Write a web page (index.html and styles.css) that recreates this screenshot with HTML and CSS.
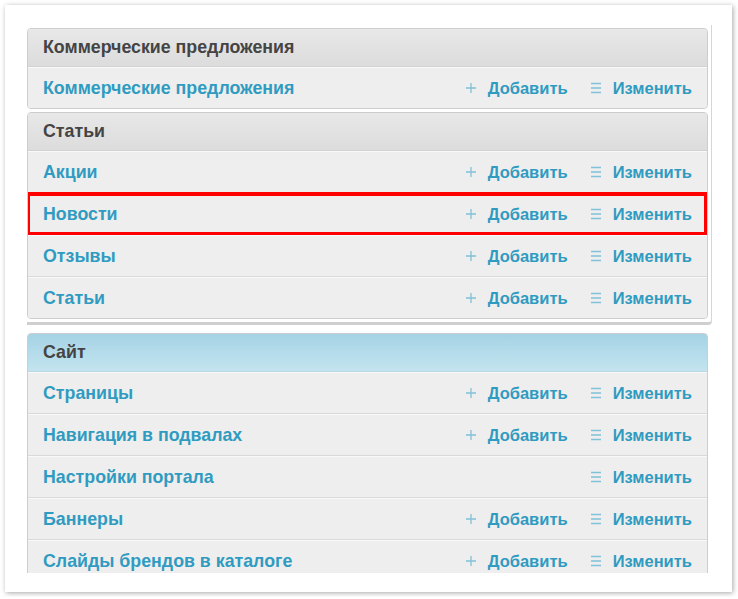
FILE: index.html
```html
<!DOCTYPE html>
<html lang="ru">
<head>
<meta charset="utf-8">
<title>Dashboard</title>
<link rel="stylesheet" href="styles.css">
</head>
<body>
<div class="card">
  <div class="viewport">
    <div class="group group-boxed">
      <section class="module">
        <h2 class="module-title">Коммерческие предложения</h2>
        <div class="row">
          <a class="row-name" href="#">Коммерческие предложения</a>
          <span class="actions">
            <a class="action" href="#"><svg class="ico" viewBox="0 0 12 12"><path d="M6 1v10M1 6h10"/></svg>Добавить</a>
            <a class="action action-change" href="#"><svg class="ico" viewBox="0 0 12 12"><path d="M1 1.5h10M1 6h10M1 10.5h10"/></svg>Изменить</a>
          </span>
        </div>
      </section>
      <section class="module">
        <h2 class="module-title">Статьи</h2>
        <div class="row">
          <a class="row-name" href="#">Акции</a>
          <span class="actions">
            <a class="action" href="#"><svg class="ico" viewBox="0 0 12 12"><path d="M6 1v10M1 6h10"/></svg>Добавить</a>
            <a class="action action-change" href="#"><svg class="ico" viewBox="0 0 12 12"><path d="M1 1.5h10M1 6h10M1 10.5h10"/></svg>Изменить</a>
          </span>
        </div>
        <div class="row row-marked">
          <a class="row-name" href="#">Новости</a>
          <span class="actions">
            <a class="action" href="#"><svg class="ico" viewBox="0 0 12 12"><path d="M6 1v10M1 6h10"/></svg>Добавить</a>
            <a class="action action-change" href="#"><svg class="ico" viewBox="0 0 12 12"><path d="M1 1.5h10M1 6h10M1 10.5h10"/></svg>Изменить</a>
          </span>
        </div>
        <div class="row">
          <a class="row-name" href="#">Отзывы</a>
          <span class="actions">
            <a class="action" href="#"><svg class="ico" viewBox="0 0 12 12"><path d="M6 1v10M1 6h10"/></svg>Добавить</a>
            <a class="action action-change" href="#"><svg class="ico" viewBox="0 0 12 12"><path d="M1 1.5h10M1 6h10M1 10.5h10"/></svg>Изменить</a>
          </span>
        </div>
        <div class="row">
          <a class="row-name" href="#">Статьи</a>
          <span class="actions">
            <a class="action" href="#"><svg class="ico" viewBox="0 0 12 12"><path d="M6 1v10M1 6h10"/></svg>Добавить</a>
            <a class="action action-change" href="#"><svg class="ico" viewBox="0 0 12 12"><path d="M1 1.5h10M1 6h10M1 10.5h10"/></svg>Изменить</a>
          </span>
        </div>
      </section>
    </div>
    <div class="group group-plain">
      <section class="module">
        <h2 class="module-title module-title-blue">Сайт</h2>
        <div class="row">
          <a class="row-name" href="#">Страницы</a>
          <span class="actions">
            <a class="action" href="#"><svg class="ico" viewBox="0 0 12 12"><path d="M6 1v10M1 6h10"/></svg>Добавить</a>
            <a class="action action-change" href="#"><svg class="ico" viewBox="0 0 12 12"><path d="M1 1.5h10M1 6h10M1 10.5h10"/></svg>Изменить</a>
          </span>
        </div>
        <div class="row">
          <a class="row-name" href="#">Навигация в подвалах</a>
          <span class="actions">
            <a class="action" href="#"><svg class="ico" viewBox="0 0 12 12"><path d="M6 1v10M1 6h10"/></svg>Добавить</a>
            <a class="action action-change" href="#"><svg class="ico" viewBox="0 0 12 12"><path d="M1 1.5h10M1 6h10M1 10.5h10"/></svg>Изменить</a>
          </span>
        </div>
        <div class="row">
          <a class="row-name" href="#">Настройки портала</a>
          <span class="actions">
            <a class="action action-change" href="#"><svg class="ico" viewBox="0 0 12 12"><path d="M1 1.5h10M1 6h10M1 10.5h10"/></svg>Изменить</a>
          </span>
        </div>
        <div class="row">
          <a class="row-name" href="#">Баннеры</a>
          <span class="actions">
            <a class="action" href="#"><svg class="ico" viewBox="0 0 12 12"><path d="M6 1v10M1 6h10"/></svg>Добавить</a>
            <a class="action action-change" href="#"><svg class="ico" viewBox="0 0 12 12"><path d="M1 1.5h10M1 6h10M1 10.5h10"/></svg>Изменить</a>
          </span>
        </div>
        <div class="row">
          <a class="row-name" href="#">Слайды брендов в каталоге</a>
          <span class="actions">
            <a class="action" href="#"><svg class="ico" viewBox="0 0 12 12"><path d="M6 1v10M1 6h10"/></svg>Добавить</a>
            <a class="action action-change" href="#"><svg class="ico" viewBox="0 0 12 12"><path d="M1 1.5h10M1 6h10M1 10.5h10"/></svg>Изменить</a>
          </span>
        </div>
      </section>
    </div>
  </div>
</div>
</body>
</html>
```

FILE: styles.css
```css
* { box-sizing: border-box; }

html, body {
  margin: 0;
  padding: 0;
  background: #fff;
}

body {
  font-family: "Liberation Sans", Arial, sans-serif;
  font-size: 17.8px;
  font-weight: bold;
}

.card {
  margin: 5px;
  width: 727px;
  height: 587px;
  background: #fff;
  box-shadow: 1px 1px 5px rgba(0, 0, 0, 0.35);
  padding: 20px 20px 19px 22px;
}

.viewport {
  height: 548px;
  overflow: hidden;
}

.group {
  display: flex;
  flex-direction: column;
  gap: 3px;
}

.group-boxed {
  padding: 3px 3px 3px 0;
  border-right: 1px solid #d6d6d6;
  border-bottom: 3px solid #cfcfcf;
  border-bottom-right-radius: 4px;
  margin-bottom: 8px;
}

.group-plain {
  padding-right: 4px;
}

.module {
  border: 1px solid #cdcdcd;
  border-radius: 4px;
  overflow: hidden;
  background: #eee;
}

.module-title {
  margin: 0;
  height: 38px;
  display: flex;
  align-items: center;
  padding-left: 15px;
  font-size: 17.8px;
  font-weight: bold;
  color: #444;
  background: linear-gradient(#e8e8e8, #dcdcdc);
  border-bottom: 1px solid #d2d2d2;
}

.module-title-blue {
  background: linear-gradient(#a5d3e5, #c3e4ef);
  border-bottom-color: #b8d8e4;
}

.row {
  position: relative;
  height: 42px;
  display: flex;
  align-items: center;
  justify-content: space-between;
  padding: 0 15px;
  background: #eee;
  border-top: 1px solid #f9f9f9;
  border-bottom: 1px solid #d9d9d9;
}

.row:last-child {
  border-bottom: none;
  height: 41px;
}

.row-name,
.action {
  color: #309bc1;
  text-decoration: none;
}

.actions {
  display: flex;
  align-items: center;
  font-size: 16.5px;
}

.action {
  display: flex;
  align-items: center;
}

.action-change {
  margin-left: 22px;
}

.ico {
  width: 12px;
  height: 12px;
  margin-right: 11px;
  fill: none;
  stroke: #80c1d9;
  stroke-width: 1.3;
}

.row-marked::after {
  content: "";
  position: absolute;
  top: -2px;
  bottom: -2px;
  left: -2px;
  right: -1px;
  border: 4px solid #f00;
  pointer-events: none;
}
```
